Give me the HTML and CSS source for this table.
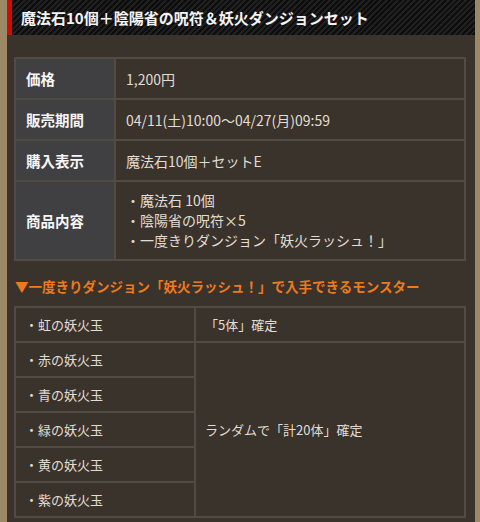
FILE: index.html
```html
<!DOCTYPE html>
<html lang="ja">
<head>
<meta charset="utf-8">
<link rel="stylesheet" href="styles.css">
</head>
<body>
<div class="frame">
  <div class="page">
    <h1 class="title">魔法石10個＋陰陽省の呪符＆妖火ダンジョンセット</h1>
    <div class="content">
      <table class="info">
        <tr><th>価格</th><td>1,200円</td></tr>
        <tr><th>販売期間</th><td>04/11(土)10:00〜04/27(月)09:59</td></tr>
        <tr><th>購入表示</th><td>魔法石10個＋セットE</td></tr>
        <tr class="tall"><th>商品内容</th><td>・魔法石 10個<br>・陰陽省の呪符×5<br>・一度きりダンジョン「妖火ラッシュ！」</td></tr>
      </table>
      <h2 class="heading">▼一度きりダンジョン「妖火ラッシュ！」で入手できるモンスター</h2>
      <table class="monsters">
        <tr><td class="name">・虹の妖火玉</td><td class="note">「5体」確定</td></tr>
        <tr><td class="name">・赤の妖火玉</td><td class="note" rowspan="5">ランダムで「計20体」確定</td></tr>
        <tr><td class="name">・青の妖火玉</td></tr>
        <tr><td class="name">・緑の妖火玉</td></tr>
        <tr><td class="name">・黄の妖火玉</td></tr>
        <tr><td class="name">・紫の妖火玉</td></tr>
      </table>
    </div>
  </div>
</div>
</body>
</html>
```

FILE: styles.css
```css
html, body {
  margin: 0;
  padding: 0;
}
body {
  background: #9c8865;
  font-family: "Noto Sans CJK JP", "Noto Sans", sans-serif;
  color: #e2ddd4;
}
.frame {
  padding: 0 5px 0 7px;
  min-height: 522px;
  box-sizing: border-box;
  display: flex;
}
.page {
  flex: 1;
  background: #3a332b;
  min-height: 522px;
}
.title {
  margin: 0;
  height: 35px;
  box-sizing: border-box;
  border-left: 5px solid #d3080b;
  padding-left: 9px;
  display: flex;
  align-items: center;
  font-size: 15px;
  font-weight: bold;
  color: #f4f4f4;
  background: repeating-linear-gradient(135deg, #202020 0 2px, #0d0d0d 2px 4px);
}
.content {
  padding: 22px 9px 0 7px;
}
table {
  width: 100%;
  border-collapse: collapse;
}
.info th, .info td, .monsters td {
  border: 2px solid #514b44;
}
.info th {
  width: 88px;
  background: #404042;
  color: #f6f6f6;
  font-size: 14.5px;
  font-weight: bold;
  text-align: left;
  padding: 0 0 0 10px;
  height: 39px;
}
.info td {
  font-size: 14px;
  line-height: 20px;
  padding: 0 10px;
}
.info .tall td {
  padding: 8px 10px 9px;
}
.heading {
  margin: 0;
  padding: 15px 0 10px 1px;
  font-size: 13.5px;
  line-height: 20px;
  font-weight: bold;
  color: #ee7a1e;
  white-space: nowrap;
}
.monsters td {
  font-size: 13px;
  padding: 0 9px;
  height: 33px;
}
.monsters .name {
  width: 160px;
}
.monsters .note {
  vertical-align: middle;
}
```
